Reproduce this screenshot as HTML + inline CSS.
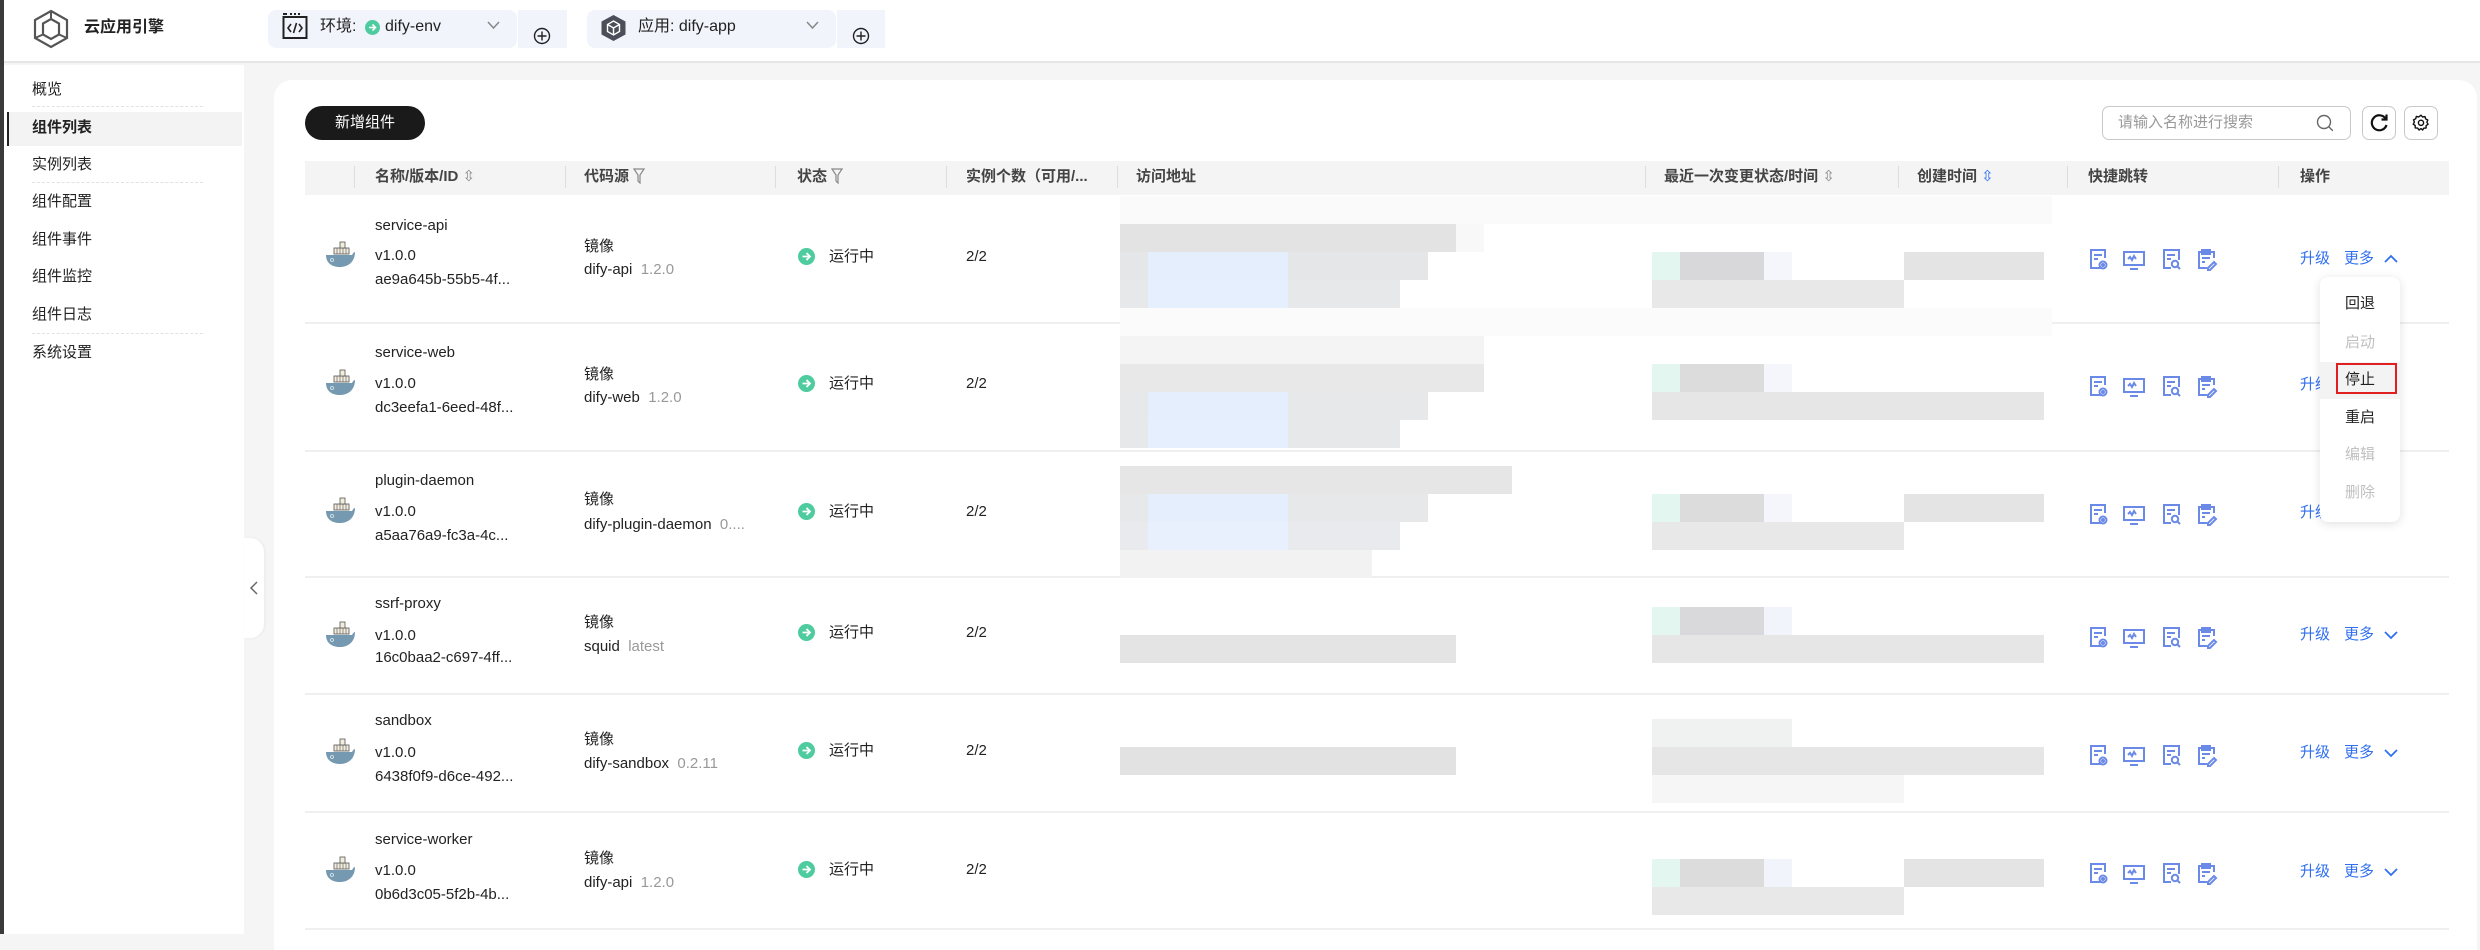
<!DOCTYPE html>
<html><head><meta charset="utf-8">
<style>
*{margin:0;padding:0;box-sizing:border-box}
body{width:2480px;height:934px;overflow:hidden;background:#f5f5f5;font-family:"Liberation Sans","Noto Sans CJK SC",sans-serif;color:#222;position:relative}
.a{position:absolute;white-space:nowrap}
.t{position:absolute;white-space:nowrap;font-size:15px;line-height:20px;color:#222}
.h{position:absolute;white-space:nowrap;font-size:15px;line-height:20px;color:#444;font-weight:bold;top:167px}
.side{position:absolute;left:32px;font-size:15px;line-height:20px;color:#222}
.g{color:#999}
.blue{color:#2f6ff0}
.vd{position:absolute;top:166px;width:1px;height:22px;background:#ddd}
.rowline{position:absolute;left:305px;width:2144px;height:2px;background:#efefef}
.mi{position:absolute;left:2345px;font-size:15px;line-height:20px}
</style></head><body>
<!-- left dark strip -->
<div class="a" style="left:0;top:0;width:4px;height:934px;background:#3a3a3a"></div>
<!-- header -->
<div class="a" style="left:4px;top:0;width:2476px;height:63px;background:#fff;border-bottom:2px solid #e6e6e8"></div>
<svg class="a" style="left:30px;top:9px" width="42" height="40" viewBox="0 0 42 40">
<path d="M21 2 L37 11 L37 29 L21 38 L5 29 L5 11 Z" fill="none" stroke="#555" stroke-width="2.2"/>
<path d="M21 10 L29 14.5 L29 25.5 L21 30 L13 25.5 L13 14.5 Z" fill="none" stroke="#555" stroke-width="2.2"/>
<path d="M21 2 L21 10 M5 29 L13 25.5 M37 29 L29 25.5" stroke="#555" stroke-width="2"/>
</svg>
<div class="a" style="left:84px;top:18px;font-size:16px;line-height:20px;font-weight:bold;color:#222">云应用引擎</div>

<div class="a" style="left:268px;top:10px;width:249px;height:38px;background:#f1f4fb;border-radius:8px"></div>
<div class="a" style="left:518px;top:10px;width:49px;height:38px;background:#f1f4fb"></div>
<svg class="a" style="left:282px;top:13px" width="26" height="27" viewBox="0 0 26 27"><rect x="1.5" y="4" width="23" height="21" fill="none" stroke="#222" stroke-width="2"/><path d="M1 1h4M8 1h2M12 1h2M16 1h2" stroke="#222" stroke-width="2"/><path d="M9 11l-3 4 3 4M17 11l3 4-3 4M14.5 10l-3 10" stroke="#222" stroke-width="1.6" fill="none"/></svg>
<div class="a" style="left:320px;top:17px;font-size:16px;line-height:20px">环境:</div>
<svg class="a" style="left:365px;top:20px" width="15" height="15"><circle cx="7.5" cy="7.5" r="7.5" fill="#4ecb9f"/><path d="M4 7.5h6.5M7.5 4.5l3 3-3 3" stroke="#fff" stroke-width="1.6" fill="none"/></svg>
<div class="a" style="left:385px;top:17px;font-size:16px;line-height:20px">dify-env</div>
<svg class="a" style="left:487px;top:21px" width="13" height="9"><path d="M1 1l5.5 6 5.5-6" stroke="#888" stroke-width="1.5" fill="none"/></svg>
<svg class="a" style="left:533px;top:27px" width="18" height="18"><circle cx="9" cy="9" r="7.5" fill="none" stroke="#222" stroke-width="1.4"/><path d="M9 4.5v9M4.5 9h9" stroke="#222" stroke-width="1.4"/></svg>

<div class="a" style="left:587px;top:10px;width:249px;height:38px;background:#f1f4fb;border-radius:8px"></div>
<div class="a" style="left:837px;top:10px;width:48px;height:38px;background:#f1f4fb"></div>
<svg class="a" style="left:600px;top:14px" width="27" height="28" viewBox="0 0 27 28"><path d="M13.5 1L25.5 7.5V20.5L13.5 27L1.5 20.5V7.5Z" fill="#4a4f5a"/><path d="M13.5 7L19.5 10.5V17.5L13.5 21L7.5 17.5V10.5Z M7.5 10.5L13.5 14L19.5 10.5 M13.5 14V21" fill="none" stroke="#fff" stroke-width="1.4"/></svg>
<div class="a" style="left:638px;top:17px;font-size:16px;line-height:20px">应用:&nbsp;dify-app</div>
<svg class="a" style="left:806px;top:21px" width="13" height="9"><path d="M1 1l5.5 6 5.5-6" stroke="#888" stroke-width="1.5" fill="none"/></svg>
<svg class="a" style="left:852px;top:27px" width="18" height="18"><circle cx="9" cy="9" r="7.5" fill="none" stroke="#222" stroke-width="1.4"/><path d="M9 4.5v9M4.5 9h9" stroke="#222" stroke-width="1.4"/></svg>

<!-- sidebar -->
<div class="a" style="left:4px;top:65px;width:240px;height:869px;background:#fff"></div>
<div class="a" style="left:7px;top:112px;width:235px;height:34px;background:#f3f3f3"></div>
<div class="a" style="left:7px;top:112px;width:2px;height:34px;background:#222"></div>
<div class="a" style="left:32px;top:106px;width:171px;border-top:1px dashed #e2e2e2"></div>
<div class="a" style="left:32px;top:182px;width:171px;border-top:1px dashed #e2e2e2"></div>
<div class="a" style="left:32px;top:333px;width:171px;border-top:1px dashed #e2e2e2"></div>
<div class="side" style="top:80px">概览</div>
<div class="side" style="top:118px;font-weight:bold">组件列表</div>
<div class="side" style="top:155px">实例列表</div>
<div class="side" style="top:192px">组件配置</div>
<div class="side" style="top:230px">组件事件</div>
<div class="side" style="top:267px">组件监控</div>
<div class="side" style="top:305px">组件日志</div>
<div class="side" style="top:343px">系统设置</div>

<!-- collapse tab -->
<div class="a" style="left:244px;top:538px;width:20px;height:100px;background:#fff;border-radius:0 14px 14px 0;box-shadow:1px 0 3px rgba(0,0,0,.05)"></div>
<svg class="a" style="left:249px;top:581px" width="10" height="14"><path d="M8 1L2 7l6 6" stroke="#666" stroke-width="1.5" fill="none"/></svg>

<!-- card -->
<div class="a" style="left:274px;top:80px;width:2203px;height:870px;background:#fff;border-radius:18px 18px 0 0"></div>
<div class="a" style="left:305px;top:106px;width:120px;height:34px;background:#1a1a1a;border-radius:17px;color:#fff;font-size:15px;line-height:34px;text-align:center">新增组件</div>
<div class="a" style="left:2102px;top:106px;width:249px;height:34px;border:1px solid #c9c9c9;border-radius:7px"></div>
<div class="a" style="left:2118px;top:113px;font-size:15px;line-height:20px;color:#999">请输入名称进行搜索</div>
<svg class="a" style="left:2316px;top:114px" width="18" height="18"><circle cx="8" cy="8" r="6.5" fill="none" stroke="#666" stroke-width="1.4"/><path d="M12.8 12.8l4 4" stroke="#666" stroke-width="1.4"/></svg>
<div class="a" style="left:2362px;top:106px;width:34px;height:34px;border:1px solid #c9c9c9;border-radius:7px"></div>
<svg class="a" style="left:2369px;top:113px" width="20" height="20"><path d="M16.5 5.5A7.5 7.5 0 1 0 17.5 12" fill="none" stroke="#111" stroke-width="2.2"/><path d="M17.5 1.5v5h-5" fill="none" stroke="#111" stroke-width="2.2"/></svg>
<div class="a" style="left:2404px;top:106px;width:34px;height:34px;border:1px solid #c9c9c9;border-radius:7px"></div>
<svg class="a" style="left:2412px;top:114px" width="18" height="18" viewBox="0 0 18 18"><path d="M9 1.2l1.6 1.8 2.4-.4.6 2.3 2.2 1.1-.9 2.2 1.2 2.1-2 1.3v2.4l-2.4.2L10.6 16 9 14.6 7 16l-1.4-1.9-2.4-.2v-2.4l-2-1.3 1.2-2.1-.9-2.2 2.2-1.1.6-2.3 2.4.4z" fill="none" stroke="#111" stroke-width="1.4" stroke-linejoin="round"/><circle cx="9" cy="8.8" r="2.6" fill="none" stroke="#111" stroke-width="1.4"/></svg>

<!-- table header -->
<div class="a" style="left:305px;top:161px;width:2144px;height:34px;background:#f4f4f4"></div>
<div class="vd" style="left:354px"></div><div class="vd" style="left:565px"></div><div class="vd" style="left:775px"></div><div class="vd" style="left:946px"></div><div class="vd" style="left:1117px"></div><div class="vd" style="left:1645px"></div><div class="vd" style="left:1898px"></div><div class="vd" style="left:2067px"></div><div class="vd" style="left:2278px"></div>
<div class="h" style="left:375px">名称/版本/ID <span style="color:#888;font-weight:normal">⇳</span></div>
<div class="h" style="left:584px">代码源 <svg width="12" height="16" style="vertical-align:-3px"><path d="M1 1h10L7 7v8L5 13V7z" fill="none" stroke="#888" stroke-width="1.2"/></svg></div>
<div class="h" style="left:797px">状态 <svg width="12" height="16" style="vertical-align:-3px"><path d="M1 1h10L7 7v8L5 13V7z" fill="none" stroke="#888" stroke-width="1.2"/></svg></div>
<div class="h" style="left:966px">实例个数（可用/...</div>
<div class="h" style="left:1136px">访问地址</div>
<div class="h" style="left:1664px">最近一次变更状态/时间 <span style="color:#888;font-weight:normal">⇳</span></div>
<div class="h" style="left:1917px">创建时间 <span style="color:#2f6ff0;font-weight:normal">⇳</span></div>
<div class="h" style="left:2088px">快捷跳转</div>
<div class="h" style="left:2300px">操作</div>

<!-- row lines -->
<div class="rowline" style="top:322px"></div>
<div class="rowline" style="top:450px"></div>
<div class="rowline" style="top:576px"></div>
<div class="rowline" style="top:693px"></div>
<div class="rowline" style="top:811px"></div>
<div class="rowline" style="top:928px"></div>

<!-- blurred areas -->
<svg class="a" style="left:0;top:0" width="2480" height="934">
<g>
<rect x="1120" y="196" width="932" height="28" fill="#fafafa"/>
<rect x="1120" y="224" width="336" height="28" fill="#e3e3e3"/><rect x="1456" y="224" width="28" height="28" fill="#f8f8f8"/>
<rect x="1120" y="252" width="308" height="28" fill="#e4e6e8"/><rect x="1148" y="252" width="140" height="28" fill="#e4eefd"/>
<rect x="1120" y="280" width="280" height="28" fill="#e6e8ea"/><rect x="1148" y="280" width="140" height="28" fill="#e6effd"/>
<rect x="1120" y="308" width="932" height="28" fill="#fbfbfb"/>
<rect x="1652" y="252" width="28" height="28" fill="#e4f6f0"/><rect x="1680" y="252" width="84" height="28" fill="#d8d8da"/><rect x="1764" y="252" width="28" height="28" fill="#f5f6fc"/>
<rect x="1904" y="252" width="140" height="28" fill="#e4e4e4"/>
<rect x="1652" y="280" width="252" height="28" fill="#e8e8e8"/>
<!-- row2 -->
<rect x="1120" y="336" width="364" height="28" fill="#f4f4f4"/>
<rect x="1120" y="364" width="364" height="28" fill="#e8e8e8"/>
<rect x="1120" y="392" width="308" height="28" fill="#e6e8ea"/><rect x="1148" y="392" width="140" height="28" fill="#e5eefd"/>
<rect x="1120" y="420" width="280" height="28" fill="#e6e8ea"/><rect x="1148" y="420" width="140" height="28" fill="#e6effd"/>
<rect x="1652" y="364" width="28" height="28" fill="#e4f6f0"/><rect x="1680" y="364" width="84" height="28" fill="#dcdcdc"/><rect x="1764" y="364" width="28" height="28" fill="#f5f6fc"/>
<rect x="1652" y="392" width="392" height="28" fill="#e6e6e6"/>
<!-- row3 -->
<rect x="1120" y="466" width="392" height="28" fill="#e6e6e6"/>
<rect x="1120" y="494" width="308" height="28" fill="#e6e8ea"/><rect x="1148" y="494" width="140" height="28" fill="#e5eefd"/>
<rect x="1120" y="522" width="280" height="28" fill="#e8eaee"/><rect x="1148" y="522" width="140" height="28" fill="#e8f0fd"/>
<rect x="1120" y="550" width="252" height="28" fill="#f2f2f2"/>
<rect x="1652" y="494" width="28" height="28" fill="#e4f6f0"/><rect x="1680" y="494" width="84" height="28" fill="#dcdcdc"/><rect x="1764" y="494" width="28" height="28" fill="#f5f6fc"/>
<rect x="1652" y="522" width="252" height="28" fill="#e8e8e8"/><rect x="1904" y="494" width="140" height="28" fill="#e4e4e4"/>
<!-- row4 -->
<rect x="1652" y="607" width="28" height="28" fill="#e4f6f0"/><rect x="1680" y="607" width="84" height="28" fill="#d9d9db"/><rect x="1764" y="607" width="28" height="28" fill="#f2f4fc"/>
<rect x="1120" y="635" width="336" height="28" fill="#e4e4e4"/>
<rect x="1652" y="635" width="392" height="28" fill="#e6e6e6"/>
<!-- row5 -->
<rect x="1652" y="719" width="140" height="28" fill="#f0f2f1"/>
<rect x="1120" y="747" width="336" height="28" fill="#e2e2e2"/>
<rect x="1652" y="747" width="392" height="28" fill="#e6e6e6"/>
<rect x="1652" y="775" width="252" height="28" fill="#f6f6f6"/>
<!-- row6 -->
<rect x="1652" y="859" width="28" height="28" fill="#e4f6f0"/><rect x="1680" y="859" width="84" height="28" fill="#dcdcdc"/><rect x="1764" y="859" width="28" height="28" fill="#f2f4fc"/>
<rect x="1904" y="859" width="140" height="28" fill="#e4e4e4"/>
<rect x="1652" y="887" width="252" height="28" fill="#e8e8e8"/>
</g>
<!-- docker + status + quick icons per row -->
<defs>
<g id="dk"><rect x="9" y="6" width="15" height="6" fill="#f2ecdc" stroke="#555" stroke-width="0.8"/><rect x="15" y="0" width="5" height="6" fill="#f2ecdc" stroke="#555" stroke-width="0.8"/><path d="M12 6v6M15 6v6M18 6v6M21 6v6" stroke="#555" stroke-width="0.6"/><path d="M1 13h26c1-2 2-3 3-3 0 10-7 15-15 15S1 21 1 13z" fill="#7599b0"/><circle cx="7" cy="18" r="1.5" fill="none" stroke="#e6eef2" stroke-width="0.8"/></g>
<g id="st"><circle cx="8.5" cy="8.5" r="8.5" fill="#4ecb9f"/><path d="M4.5 8.5h7.5M8.5 5l3.5 3.5-3.5 3.5" stroke="#fff" stroke-width="1.8" fill="none"/></g>
<g id="qi" fill="none" stroke="#6b89e6" stroke-width="2">
<path d="M13 20H3V2h14v8M6 7h8M6 11h4"/><circle cx="15" cy="17" r="3.5"/><circle cx="15" cy="17" r="1"/>
<path d="M36 4h20v13H36zM40 11l2-2 2 3 2-4 2 3M42 21h8"/>
<path d="M83 20h-7V2h15v10M79 7h8M79 11h4"/><circle cx="87" cy="16" r="3.2"/><path d="M89.5 18.5l2.5 2.5"/>
<path d="M119 20h-8V4h15v6M114 2h8v4h-8zM114 10h8M114 14h3M120 20l6-6 2 2-6 6h-2z"/>
</g>
</defs>
<g transform="translate(325,242)"><use href="#dk"/></g>
<g transform="translate(325,370)"><use href="#dk"/></g>
<g transform="translate(325,498)"><use href="#dk"/></g>
<g transform="translate(325,622)"><use href="#dk"/></g>
<g transform="translate(325,739)"><use href="#dk"/></g>
<g transform="translate(325,857)"><use href="#dk"/></g>
<g transform="translate(798,248)"><use href="#st"/></g>
<g transform="translate(798,375)"><use href="#st"/></g>
<g transform="translate(798,503)"><use href="#st"/></g>
<g transform="translate(798,624)"><use href="#st"/></g>
<g transform="translate(798,742)"><use href="#st"/></g>
<g transform="translate(798,861)"><use href="#st"/></g>
<g transform="translate(2088,248)"><use href="#qi"/></g>
<g transform="translate(2088,375)"><use href="#qi"/></g>
<g transform="translate(2088,503)"><use href="#qi"/></g>
<g transform="translate(2088,626)"><use href="#qi"/></g>
<g transform="translate(2088,744)"><use href="#qi"/></g>
<g transform="translate(2088,862)"><use href="#qi"/></g>
</svg>

<!-- row texts -->
<div class="t" style="left:375px;top:216px">service-api</div><div class="t" style="left:375px;top:246px">v1.0.0</div><div class="t" style="left:375px;top:270px">ae9a645b-55b5-4f...</div>
<div class="t" style="left:584px;top:237px">镜像</div><div class="t" style="left:584px;top:260px">dify-api <span class="g">&nbsp;1.2.0</span></div>
<div class="t" style="left:829px;top:247px">运行中</div><div class="t" style="left:966px;top:247px">2/2</div>

<div class="t" style="left:375px;top:343px">service-web</div><div class="t" style="left:375px;top:374px">v1.0.0</div><div class="t" style="left:375px;top:398px">dc3eefa1-6eed-48f...</div>
<div class="t" style="left:584px;top:365px">镜像</div><div class="t" style="left:584px;top:388px">dify-web <span class="g">&nbsp;1.2.0</span></div>
<div class="t" style="left:829px;top:374px">运行中</div><div class="t" style="left:966px;top:374px">2/2</div>

<div class="t" style="left:375px;top:471px">plugin-daemon</div><div class="t" style="left:375px;top:502px">v1.0.0</div><div class="t" style="left:375px;top:526px">a5aa76a9-fc3a-4c...</div>
<div class="t" style="left:584px;top:490px">镜像</div><div class="t" style="left:584px;top:515px">dify-plugin-daemon <span class="g">&nbsp;0....</span></div>
<div class="t" style="left:829px;top:502px">运行中</div><div class="t" style="left:966px;top:502px">2/2</div>

<div class="t" style="left:375px;top:594px">ssrf-proxy</div><div class="t" style="left:375px;top:626px">v1.0.0</div><div class="t" style="left:375px;top:648px">16c0baa2-c697-4ff...</div>
<div class="t" style="left:584px;top:613px">镜像</div><div class="t" style="left:584px;top:637px">squid <span class="g">&nbsp;latest</span></div>
<div class="t" style="left:829px;top:623px">运行中</div><div class="t" style="left:966px;top:623px">2/2</div>

<div class="t" style="left:375px;top:711px">sandbox</div><div class="t" style="left:375px;top:743px">v1.0.0</div><div class="t" style="left:375px;top:767px">6438f0f9-d6ce-492...</div>
<div class="t" style="left:584px;top:730px">镜像</div><div class="t" style="left:584px;top:754px">dify-sandbox <span class="g">&nbsp;0.2.11</span></div>
<div class="t" style="left:829px;top:741px">运行中</div><div class="t" style="left:966px;top:741px">2/2</div>

<div class="t" style="left:375px;top:830px">service-worker</div><div class="t" style="left:375px;top:861px">v1.0.0</div><div class="t" style="left:375px;top:885px">0b6d3c05-5f2b-4b...</div>
<div class="t" style="left:584px;top:849px">镜像</div><div class="t" style="left:584px;top:873px">dify-api <span class="g">&nbsp;1.2.0</span></div>
<div class="t" style="left:829px;top:860px">运行中</div><div class="t" style="left:966px;top:860px">2/2</div>

<!-- ops -->
<div class="t blue" style="left:2300px;top:249px">升级</div><div class="t blue" style="left:2344px;top:249px">更多</div>
<svg class="a" style="left:2384px;top:254px" width="14" height="9"><path d="M1 8l6-6 6 6" stroke="#2f6ff0" stroke-width="1.8" fill="none"/></svg>
<div class="t blue" style="left:2300px;top:375px">升级</div>
<div class="t blue" style="left:2300px;top:503px">升级</div>
<div class="t blue" style="left:2300px;top:625px">升级</div><div class="t blue" style="left:2344px;top:625px">更多</div>
<svg class="a" style="left:2384px;top:631px" width="14" height="9"><path d="M1 1l6 6 6-6" stroke="#2f6ff0" stroke-width="1.8" fill="none"/></svg>
<div class="t blue" style="left:2300px;top:743px">升级</div><div class="t blue" style="left:2344px;top:743px">更多</div>
<svg class="a" style="left:2384px;top:749px" width="14" height="9"><path d="M1 1l6 6 6-6" stroke="#2f6ff0" stroke-width="1.8" fill="none"/></svg>
<div class="t blue" style="left:2300px;top:862px">升级</div><div class="t blue" style="left:2344px;top:862px">更多</div>
<svg class="a" style="left:2384px;top:868px" width="14" height="9"><path d="M1 1l6 6 6-6" stroke="#2f6ff0" stroke-width="1.8" fill="none"/></svg>

<!-- dropdown -->
<div class="a" style="left:2320px;top:277px;width:80px;height:245px;background:#fff;border-radius:8px;box-shadow:0 2px 10px rgba(0,0,0,.12)"></div>
<div class="a" style="left:2320px;top:362px;width:80px;height:37px;background:#f3f3f3"></div>
<div class="a" style="left:2336px;top:363px;width:61px;height:31px;border:2px solid #e02020"></div>
<div class="mi" style="top:294px">回退</div>
<div class="mi" style="top:333px;color:#c0c0c0">启动</div>
<div class="mi" style="top:370px">停止</div>
<div class="mi" style="top:408px">重启</div>
<div class="mi" style="top:445px;color:#c0c0c0">编辑</div>
<div class="mi" style="top:483px;color:#c0c0c0">删除</div>
</body></html>
